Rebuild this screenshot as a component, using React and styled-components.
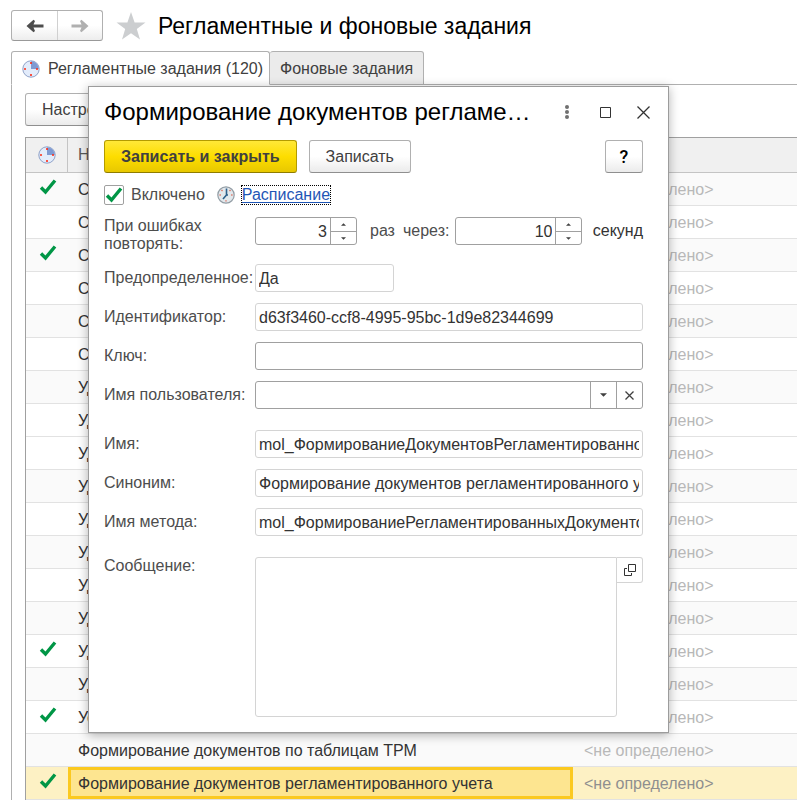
import React, { useState } from "react";
import styled, { createGlobalStyle } from "styled-components";

const GlobalStyle = createGlobalStyle`
    *{ box-sizing:border-box; }
    body{ margin:0; background:#fff; color:#333; font-family:"Liberation Sans", Arial, sans-serif; font-size:16px; line-height:18px; }
    button, input, select, textarea{ margin:0; font:inherit; color:inherit; }
    h1, h2{ margin:0; font-size:24px; font-weight:400; line-height:32px; color:#000; }
    svg{ display:block; }
`

const Page = styled.div`
    position:relative;
    height:100vh;
    min-height:748px;
    overflow:hidden;
    display:flex;
    flex-direction:column;
`

const PageHeader = styled.header`
    display:flex;
    align-items:center;
    padding:9px 11px;
    height:51px;
    h1{ padding-left:12px; font-size:23px; }
`

const NavButtons = styled.div`
    display:flex;
    height:31px;
    margin-right:13px;
    border:1px solid #b0b0b0;
    border-bottom-color:#999;
    border-radius:3px;
    background:linear-gradient(#fff 50%, #ededed);
`

const NavButton = styled.button`
    display:flex;
    align-items:center;
    justify-content:center;
    width:45px;
    padding:0;
    border:0;
    background:none;
    color:${props => props.disabled ? "#b0b0b0" : "#4d4d4d"};
    & + &{ border-left:1px solid #d0d0d0; }
`

const StarButton = styled.button`
    padding:0;
    border:0;
    background:none;
`

const Tabs = styled.div`
    display:flex;
    flex:none;
    height:34px;
    padding-left:11px;
    background:linear-gradient(#b0b0b0, #b0b0b0) 11px 100% / 100% 1px no-repeat;
`

const Tab = styled.button`
    display:flex;
    align-items:center;
    gap:8px;
    padding:1px 10px 0;
    border:1px solid #b0b0b0;
    border-bottom-color:${props => props.$active ? "#fff" : "#b0b0b0"};
    border-radius:3px 3px 0 0;
    background:${props => props.$active ? "#fff" : "#ebebeb"};
    color:#404040;
    &:first-child{ padding-right:6px; }
    & + &{ border-left:0; }
`

const Panel = styled.main`
    flex:1;
    display:flex;
    flex-direction:column;
    align-items:flex-start;
    gap:11px;
    margin-left:11px;
    padding:8px 0 0 13px;
    border-left:1px solid #b0b0b0;
`

const Button = styled.button`
    height:33px;
    padding:0 16px;
    border:1px solid ${props => props.$primary ? "#b39b00" : "#b0b0b0"};
    border-bottom-color:${props => props.$primary ? "#8f7c00" : "#8f8f8f"};
    border-radius:3px;
    background:${props => props.$primary ? "linear-gradient(#ffe838, #fddd00 50%, #e8c800)" : "linear-gradient(#fff 50%, #ebebeb)"};
    color:#404040;
    font-weight:${props => props.$primary ? 700 : 400};
    white-space:nowrap;
`

const HelpButton = styled(Button)`
    width:38px;
    margin-left:auto;
    padding:0;
    color:#000;
    font-family:Roboto, sans-serif;
    font-size:18px;
    font-weight:500;
`

const Table = styled.table`
    width:100%;
    table-layout:fixed;
    border-collapse:separate;
    border-spacing:0;
    border-top:1px solid #a0a0a0;
    border-left:1px solid #a0a0a0;
    th, td{ padding:2px 10px 0; text-align:left; font-weight:400; white-space:nowrap; overflow:hidden; }
    th{ height:35px; padding-top:0; background:#f0f0f0; border-bottom:1px solid #c4c4c4; color:#595959; }
    th:first-child{ border-right:1px solid #c4c4c4; }
`

const MarkCol = styled.col`
    width:42px;
`

const NameCol = styled.col`
    width:505px;
`

const Row = styled.tr`
    background:${props => props.$selected ? "#fdf1c4" : props.$shaded ? "#fafafa" : "#fff"};
    td{ height:33px; border-bottom:1px solid #e2e2e2; }
    td:nth-child(2){
        ${props => props.$selected && "background:#fde590; box-shadow:inset 0 0 0 3px #fbc920;"}
    }
    td:last-child{ padding-left:11px; color:${props => props.$selected ? "#8f8f8f" : "#b8b8b8"}; }
`

const IconCell = styled.div`
    display:flex;
    justify-content:center;
`

const MarkCell = styled.div`
    padding:0 0 6px 3px;
`

const Dialog = styled.section`
    position:absolute;
    top:86px;
    left:88px;
    width:581px;
    max-width:calc(100% - 96px);
    padding:0 25px 15px 15px;
    border:1px solid #9c9c9c;
    background:#fff;
    box-shadow:0 2px 10px rgba(0, 0, 0, 0.3);
`

const DialogHeader = styled.div`
    display:flex;
    align-items:center;
    height:53px;
    margin-right:-19px;
    padding-bottom:3px;
    h2{ flex:1; margin-right:14px; overflow:hidden; text-overflow:ellipsis; white-space:nowrap; }
`

const WindowButton = styled.button`
    display:flex;
    align-items:center;
    justify-content:center;
    width:38px;
    height:38px;
    padding:0;
    border:0;
    background:none;
`

const Commands = styled.div`
    display:flex;
    gap:12px;
`

const Options = styled.div`
    display:flex;
    align-items:center;
    height:44px;
    color:#4d4d4d;
`

const CheckLabel = styled.label`
    display:grid;
    grid-template-columns:20px auto;
    column-gap:7px;
    align-items:center;
    margin-right:12px;
    input{ grid-area:1 / 1; appearance:none; width:20px; height:20px; border:1px solid #a0a0a0; border-radius:2px; }
    svg{ grid-area:1 / 1; justify-self:center; pointer-events:none; visibility:hidden; }
    input:checked + svg{ visibility:visible; }
`

const ScheduleLink = styled.a`
    margin-left:7px;
    color:#1f56b5;
    outline:1px dotted #000;
    text-decoration:underline;
    text-underline-offset:2px;
`

const Fields = styled.div`
    display:flex;
    flex-direction:column;
    gap:11px;
`

const FieldGroup = styled.div`
    display:grid;
    gap:11px;
    padding-bottom:10px;
`

const Field = styled.div`
    display:grid;
    grid-template-columns:151px minmax(0, 1fr);
    align-items:${props => props.$top ? "start" : "center"};
    label{ color:#4d4d4d; }
`

const TextInput = styled.input`
    width:${props => props.$short ? "139px" : "100%"};
    height:28px;
    padding:1px 3px 0;
    border:1px solid ${props => props.readOnly ? "#d4d4d4" : "#a0a0a0"};
    border-radius:3px;
    background:#fff;
    outline:0;
`

const Retry = styled.div`
    display:flex;
    align-items:center;
    height:28px;
    span:last-child{ margin-left:auto; }
`

const RetryLabel = styled.label`
    margin:0 6px 0 8px;
`

const RetryText = styled.span`
    margin-left:13px;
    color:#4d4d4d;
`

const Spinner = styled.div`
    display:grid;
    grid-template:1fr 1fr / 1fr 26px;
    width:${props => props.$wide ? "127px" : "102px"};
    height:28px;
    border:1px solid #a0a0a0;
    border-radius:3px;
    input{ grid-row:1 / 3; width:100%; min-width:0; padding:1px 3px 0; border:0; background:none; text-align:right; appearance:textfield; outline:0; }
    input::-webkit-inner-spin-button{ appearance:none; margin:0; }
    button{ display:flex; align-items:center; justify-content:center; padding:0; border:0; border-left:1px solid #a0a0a0; background:none; }
    button:last-child{ border-top:1px solid #a0a0a0; }
`

const ComboBox = styled.div`
    display:grid;
    grid-template-columns:1fr 26px 26px;
    height:28px;
    border:1px solid #a0a0a0;
    border-radius:3px;
    select{ grid-area:1 / 1 / 2 / 3; padding:0 30px 0 3px; border:0; background:none; appearance:none; outline:0; }
`

const ComboCell = styled.span`
    grid-area:1 / 2;
    display:flex;
    align-items:center;
    justify-content:center;
    border-left:1px solid #a0a0a0;
    pointer-events:none;
`

const ClearButton = styled.button`
    grid-area:1 / 3;
    display:flex;
    align-items:center;
    justify-content:center;
    padding:0;
    border:0;
    border-left:1px solid #a0a0a0;
    background:none;
`

const Message = styled.div`
    display:flex;
    align-items:flex-start;
    textarea{ flex:1; min-width:0; height:160px; padding:3px; border:1px solid #d4d4d4; border-radius:3px 0 3px 3px; resize:none; outline:0; }
    button{ display:flex; align-items:center; justify-content:center; width:26px; height:26px; padding:0; border:1px solid #d4d4d4; border-left:0; border-radius:0 3px 3px 0; background:#fff; }
`

const jobs = [
    ["Синхронизация данных", true],
    ["Синхронизация настроек", false],
    ["Синхронизация файлов", true],
    ["Сбор статистики", false],
    ["Создание начального образа", false],
    ["Сжатие таблиц", false],
    ["Удаление временных файлов", false],
    ["Удаление неактуальных данных", false],
    ["Удаление неиспользуемых файлов", false],
    ["Удаление помеченных объектов", false],
    ["Удаление событий", false],
    ["Удаление сообщений", false],
    ["Удаление устаревших версий", false],
    ["Удаление файлов", false],
    ["Удаление записей", true],
    ["Удаление настроек", false],
    ["Установка периода итогов", true],
    ["Формирование документов по таблицам ТРМ", false],
    ["Формирование документов регламентированного учета", true],
]

// striping starts over on the second portion of the list
const PORTION = 8;

function isShaded(i) {
    return i < PORTION ? i % 2 === 0 : i % 2 === 1;
}

function Arrow({ back }) {
    return (
        <svg width="18" height="14" viewBox="0 0 18 14" fill="currentColor">
            {back
                ? <path d="M0.500 7 7.500.8 9 2 7.500 5.500H17.500V8.500H7.500L9 12 7.500 13.200Z" />
                : <path d="M17.500 7 10.500.8 9 2 10.500 5.500H.5V8.500H10.500L9 12 10.500 13.200Z" />}
        </svg>
    );
}

function CheckMark() {
    return (
        <svg width="18" height="18" viewBox="0 0 18 18">
            <path d="M2 9.500 6.500 14 16 2.500" fill="none" stroke="#009646" strokeWidth="3.400" />
        </svg>
    );
}

function TaskClock() {
    return (
        <svg width="18" height="18" viewBox="0 0 18 18">
            <circle cx="9" cy="9" r="8.200" fill="#e3ecfb" stroke="#8fa2c8" />
            <path d="M9 9V1.200A7.800 7.800 0 0 1 16.800 9Z" fill="#7f9ad2" />
            <path d="M9 2v2M9 14v2M2 9h2M14 9h2" stroke="#ff2a12" strokeWidth="1.600" />
        </svg>
    );
}

function ScheduleClock() {
    return (
        <svg width="18" height="18" viewBox="0 0 18 18">
            <circle cx="9" cy="9" r="8.200" fill="#e2e8ec" stroke="#929da5" strokeWidth="1.200" />
            <path d="M9 14.200v1.300M2.500 9h1.300M14.200 9h1.300M4.500 4l1 1M13.500 4l-1 1" stroke="#d96a5a" strokeWidth="1.300" />
            <path d="M9.500 2.500V9L6 13M9 9h2" fill="none" stroke="#2d5f8a" strokeWidth="1.600" />
        </svg>
    );
}

function Triangle({ up, large }) {
    return (
        <svg width={large ? 7 : 5} height={large ? 4 : 3} viewBox="0 0 6 3" fill="#404040">
            <path d={up ? "M0 3 3 0 6 3Z" : "M0 0H6L3 3Z"} />
        </svg>
    );
}

function NumberField({ id, value, onChange, wide }) {
    return (
        <Spinner $wide={wide}>
            <input id={id} type="number" value={value} onChange={e => onChange(Number(e.target.value))} />
            <button type="button" aria-label="Увеличить" onClick={() => onChange(value + 1)}><Triangle up /></button>
            <button type="button" aria-label="Уменьшить" onClick={() => onChange(value - 1)}><Triangle /></button>
        </Spinner>
    );
}

function ReadOnlyField({ id, label, value, short }) {
    return (
        <Field>
            <label htmlFor={id}>{label}</label>
            <TextInput id={id} value={value} $short={short} readOnly />
        </Field>
    );
}

function JobTable() {
    return (
        <Table>
            <colgroup><MarkCol /><NameCol /><col /></colgroup>
            <thead>
                <tr>
                    <th><IconCell><TaskClock /></IconCell></th>
                    <th>Наименование</th>
                    <th>Статус</th>
                </tr>
            </thead>
            <tbody>
                {jobs.map(([name, enabled], i) => (
                    <Row key={name} $selected={i === jobs.length - 1} $shaded={isShaded(i)}>
                        <td>{enabled && <MarkCell><CheckMark /></MarkCell>}</td>
                        <td>{name}</td>
                        <td>&lt;не определено&gt;</td>
                    </Row>
                ))}
            </tbody>
        </Table>
    );
}

function JobDialog() {

    let [enabled, setEnabled] = useState(true);
    let [count, setCount] = useState(3);
    let [interval, setInterval] = useState(10);
    let [key, setKey] = useState("");
    let [user, setUser] = useState("");

    return (
        <Dialog role="dialog" aria-labelledby="dialog-title">
            <DialogHeader>
                <h2 id="dialog-title">Формирование документов регламентированного учета</h2>
                <WindowButton aria-label="Меню">
                    <svg width="4" height="14" viewBox="0 0 4 14" fill="#707070">
                        <circle cx="2" cy="2" r="2" /><circle cx="2" cy="7" r="2" /><circle cx="2" cy="12" r="2" />
                    </svg>
                </WindowButton>
                <WindowButton aria-label="Развернуть">
                    <svg width="11" height="11" viewBox="0 0 11 11"><path d="M.5.5h10v10H.5Z" fill="none" stroke="#333" /></svg>
                </WindowButton>
                <WindowButton aria-label="Закрыть">
                    <svg width="13" height="13" viewBox="0 0 13 13"><path d="M.5.5l12 12M12.500.5l-12 12" stroke="#333" strokeWidth="1.300" /></svg>
                </WindowButton>
            </DialogHeader>
            <Commands>
                <Button $primary>Записать и закрыть</Button>
                <Button>Записать</Button>
                <HelpButton>?</HelpButton>
            </Commands>
            <Options>
                <CheckLabel>
                    <input type="checkbox" checked={enabled} onChange={() => setEnabled(!enabled)} />
                    <CheckMark />
                    Включено
                </CheckLabel>
                <ScheduleClock />
                <ScheduleLink href="#schedule">Расписание</ScheduleLink>
            </Options>
            <Fields>
                <FieldGroup>
                    <Field $top>
                        <label htmlFor="count">При ошибках<br />повторять:</label>
                        <Retry>
                            <NumberField id="count" value={count} onChange={setCount} />
                            <RetryText>раз</RetryText>
                            <RetryLabel htmlFor="interval">через:</RetryLabel>
                            <NumberField id="interval" value={interval} onChange={setInterval} wide />
                            <span>секунд</span>
                        </Retry>
                    </Field>
                    <ReadOnlyField id="predefined" label="Предопределенное:" value="Да" short />
                    <ReadOnlyField id="uuid" label="Идентификатор:" value="d63f3460-ccf8-4995-95bc-1d9e82344699" />
                    <Field>
                        <label htmlFor="key">Ключ:</label>
                        <TextInput id="key" value={key} onChange={e => setKey(e.target.value)} />
                    </Field>
                    <Field>
                        <label htmlFor="user">Имя пользователя:</label>
                        <ComboBox>
                            <select id="user" value={user} onChange={e => setUser(e.target.value)}>
                                <option value=""></option>
                            </select>
                            <ComboCell><Triangle large /></ComboCell>
                            <ClearButton aria-label="Очистить" onClick={() => setUser("")}>
                                <svg width="9" height="9" viewBox="0 0 9 9"><path d="M.5.5l8 8M8.500.5l-8 8" stroke="#404040" strokeWidth="1.300" /></svg>
                            </ClearButton>
                        </ComboBox>
                    </Field>
                </FieldGroup>
                <FieldGroup>
                    <ReadOnlyField id="name" label="Имя:" value="mol_ФормированиеДокументовРегламентированногоУчета" />
                    <ReadOnlyField id="synonym" label="Синоним:" value="Формирование документов регламентированного учета" />
                    <ReadOnlyField id="method" label="Имя метода:" value="mol_ФормированиеРегламентированныхДокументов" />
                </FieldGroup>
                <Field $top>
                    <label htmlFor="message">Сообщение:</label>
                    <Message>
                        <textarea id="message" readOnly />
                        <button type="button" aria-label="Открыть">
                            <svg width="12" height="12" viewBox="0 0 12 12" fill="none" stroke="#333">
                                <path d="M4.500.5h7v7h-7ZM3 4.500H.5v7h7V9" />
                            </svg>
                        </button>
                    </Message>
                </Field>
            </Fields>
        </Dialog>
    );
}

function App() {
    return (
        <Page>
            <GlobalStyle />
            <PageHeader>
                <NavButtons>
                    <NavButton aria-label="Назад"><Arrow back /></NavButton>
                    <NavButton aria-label="Вперед" disabled><Arrow /></NavButton>
                </NavButtons>
                <StarButton aria-label="В избранное">
                    <svg width="30" height="28" viewBox="0 0 30 28">
                        <path d="M15 0 18.600 10.400H29.500L20.800 17 24 27.500 15 21.200 6 27.500 9.200 17 .5 10.400H11.400Z" fill="#ccced0" />
                    </svg>
                </StarButton>
                <h1>Регламентные и фоновые задания</h1>
            </PageHeader>
            <Tabs role="tablist">
                <Tab role="tab" aria-selected="true" $active><TaskClock />Регламентные задания (120)</Tab>
                <Tab role="tab" aria-selected="false">Фоновые задания</Tab>
            </Tabs>
            <Panel>
                <Button>Настроить расписание</Button>
                <JobTable />
            </Panel>
            <JobDialog />
        </Page>
    )
}

export default App;
